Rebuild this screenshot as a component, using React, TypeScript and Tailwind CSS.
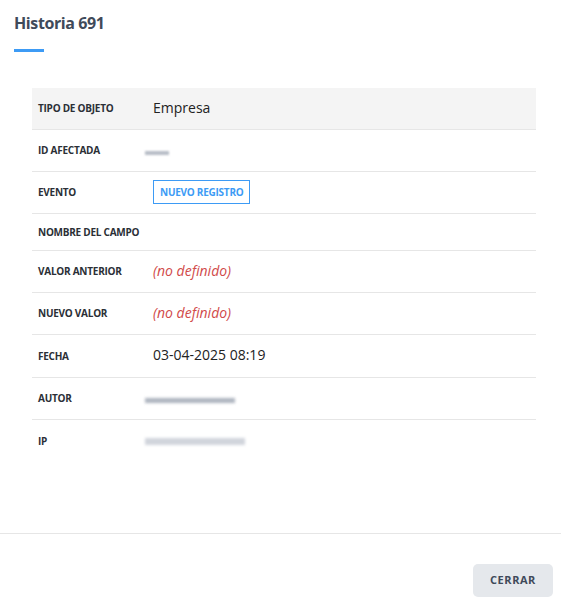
export default function App() {
  const data = [
    { label: "TIPO DE OBJETO", value: <span className="text-[14px] text-[#222]">Empresa</span>, cls: "h-[42px] bg-[#f4f4f4]" },
    { label: "ID AFECTADA", value: <span className="inline-block h-[4px] w-[24px] bg-gray-400 blur-[1px] opacity-70 ml-[-8px]" />, cls: "h-[42px]" },
    {
      label: "EVENTO",
      value: (
        <span className="inline-block border border-[#3d9bf5] px-[6px] py-[4px] text-[10px] font-bold text-[#3d9bf5] leading-[14px] tracking-tight">
          NUEVO REGISTRO
        </span>
      ),
      cls: "h-[42px]",
    },
    { label: "NOMBRE DEL CAMPO", value: null, cls: "h-[37px]" },
    { label: "VALOR ANTERIOR", value: <span className="text-[14px] italic text-[#d14a4a]">(no definido)</span>, cls: "h-[42px]" },
    { label: "NUEVO VALOR", value: <span className="text-[14px] italic text-[#d14a4a]">(no definido)</span>, cls: "h-[42px]" },
    { label: "FECHA", value: <span className="text-[14px] text-[#222]">03-04-2025 08:19</span>, cls: "h-[43px]" },
    { label: "AUTOR", value: <span className="inline-block h-[5px] w-[90px] bg-gray-400 blur-[1.5px] opacity-80 ml-[-8px]" />, cls: "h-[42px]" },
    { label: "IP", value: <span className="inline-block h-[7px] w-[100px] bg-gray-300 blur-[1.5px] ml-[-8px]" />, cls: "h-[42px]" },
  ];

  return (
    <div className="w-[561px] h-[604px] bg-white flex flex-col" style={{ fontFamily: '"Open Sans", "Noto Sans", sans-serif' }}>
      <div className="px-[14px] pt-[11px]">
        <h1 className="text-[16px] font-bold text-[#3f4a5a] leading-[24px] tracking-tight">Historia 691</h1>
        <div className="mt-[14px] h-[3px] w-[30px] bg-[#3d9bf5]" />
      </div>
      <div className="mx-[32px] mt-[36px] w-[504px]">
        {data.map((r, i) => (
          <div
            key={r.label}
            className={`flex items-center ${r.cls} ${i < data.length - 1 ? "border-b border-[#e6e6e6]" : ""}`}
          >
            <div className="w-[121px] pl-[6px] text-[10px] font-bold text-[#2b2f36] tracking-tight">{r.label}</div>
            <div className="flex-1 pb-[4px]">{r.value}</div>
          </div>
        ))}
      </div>
      <div className="mt-auto border-t border-[#e6e6e6] h-[71px] flex items-end justify-end px-[8px] pb-[7px]">
        <button className="h-[33px] w-[80px] rounded-[5px] bg-[#e5e8ec] text-[11px] font-bold text-[#3f4a5a] tracking-wider">
          CERRAR
        </button>
      </div>
    </div>
  );
}
